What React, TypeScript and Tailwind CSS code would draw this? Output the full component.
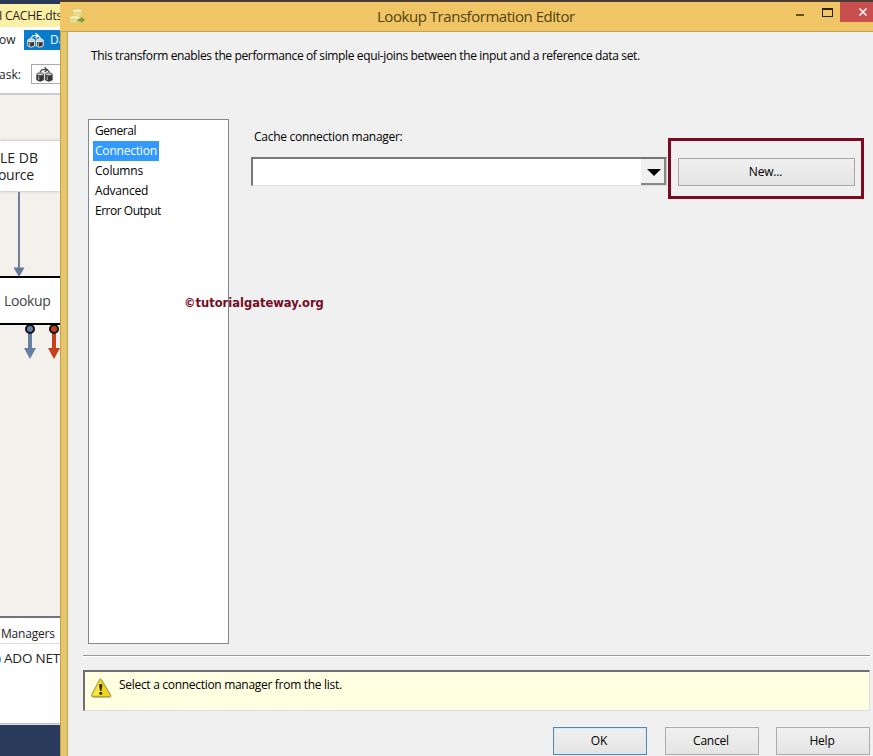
import type { ReactNode } from "react";

const pages = [
  { name: "General", style: "w-[44px] tracking-[-0.45px]" },
  { name: "Connection", style: "w-[66px] tracking-[-0.2px]", active: true },
  { name: "Columns", style: "w-[52px] tracking-[-0.2px]" },
  { name: "Advanced", style: "w-[57px] tracking-[-0.2px]" },
  { name: "Error Output", style: "w-[70px] tracking-[-0.48px]" },
];

function DataFlowIcon({ className }: { className?: string }) {
  return (
    <svg viewBox="0 0 17 17" className={className}>
      <g fill="#353535" stroke="currentColor" strokeWidth=".9">
        <path d="M.8 8.500v5.500q3.400 2.500 6.800 0V8.500zM9.400 8.500v5.500q3.400 2.500 6.800 0V8.500z" />
        <ellipse cx="4.200" cy="8.300" rx="3.400" ry="1.500" fill="#c9c9c9" />
        <ellipse cx="12.800" cy="8.300" rx="3.400" ry="1.500" fill="#c9c9c9" />
      </g>
      <path d="M2.700 10.500v3.500M11.300 10.500v3.500" stroke="#aaa" strokeWidth="1.200" />
      <path d="M4 6.200 6 3.700h5M8.500 1.200 11.300 3.700 8.500 6.200M11.500 4l2 2.200" fill="none" stroke="currentColor" strokeWidth="1.200" />
    </svg>
  );
}

function EditorIcon() {
  return (
    <svg viewBox="0 0 17 17" className="h-[17px] w-[17px]">
      <g fill="#e9dc8d" stroke="#d6c36c" strokeWidth=".6">
        <path d="M3.500 1.500v6.500q4.500 2 9.500 0V1.500z" />
        <path d="M3.500 1.700q4.700-1.500 9.500 0v2q-4.700 1.200-9.500 0z" fill="#faf4c0" />
        <path d="M.7 8.500v6q5 2 10.500 0v-6z" />
        <path d="M.7 8.500q5-1.500 10.500 0v2q-5 1.200-10.500 0z" fill="#faf4c0" />
      </g>
      <path d="M8 13.500c1-2.500 2-3 4-3V8.700l4.300 3.300L12 15v-1.700c-2 0-2.500 0-4 .7z" fill="#7f9b3a" />
    </svg>
  );
}

function WarningIcon() {
  return (
    <svg viewBox="0 0 22 20" className="h-[20px] w-[22px]">
      <path d="M11.800 1.800 21 17.500q.6 2-1 2H3" fill="none" stroke="#8b8660" strokeOpacity=".5" />
      <path d="M11 1.200 20.500 17q.7 1.600-1 1.600h-17q-1.700 0-1-1.600L9.800 1.200q.6-.8 1.200 0z" fill="#ecd51a" stroke="#a99a42" />
      <path d="M10.500 3 3 17h8z" fill="#f9e94a" />
      <path d="M9 6.500q1.700-1 3.400 0l-.9 6.200H9.900z" fill="#332c0b" />
      <circle cx="10.700" cy="15.200" r="1.500" fill="#332c0b" />
    </svg>
  );
}

function Button({ children, className }: { children: ReactNode; className: string }) {
  return (
    <button className={`border bg-gradient-to-b from-[#f0f0f0] to-[#e4e4e4] pr-[2px] text-center tracking-[-0.2px] ${className}`}>
      {children}
    </button>
  );
}

function DesignerPane() {
  return (
    <div className="flex w-[60px] shrink-0 flex-col overflow-hidden whitespace-nowrap bg-white text-[#222]">
      <div className="h-1 shrink-0 bg-[#293955]" />
      <div className="flex h-[23px] shrink-0 items-center bg-[#fbf0a5] text-[12px] leading-[22px]">
        <span className="-ml-px tracking-[-0.2px]">I CACHE.dts</span>
      </div>
      <div className="flex h-[26px] shrink-0 items-center text-[12px]">
        <span className="-ml-px w-[25px] shrink-0">ow</span>
        <div className="flex h-5 w-14 shrink-0 items-center gap-[7px] bg-[#087bca] pl-[3px] text-white">
          <DataFlowIcon className="h-[17px] w-[17px] shrink-0" />
          <span className="-ml-px">Data Flow</span>
        </div>
      </div>
      <div className="flex h-[40px] shrink-0 items-center text-[12px]">
        <span className="-ml-px w-8 shrink-0 pt-[3px]">ask:</span>
        <div className="mt-[2px] flex h-5 w-14 shrink-0 items-center border border-[#aaa] pl-1 text-[#444]">
          <DataFlowIcon className="h-[17px] w-[17px]" />
        </div>
      </div>
      <div className="h-[2px] shrink-0 bg-[#c9cad6]" />

      <div className="relative h-[521px] shrink-0 bg-[#f4f0eb]">
        <div className="absolute top-[46px] left-0 h-[50px] w-[60px] bg-white pt-2 text-[14px] leading-[17px] shadow-[0_0_3px_#aaa]">
          <div>LE DB</div>
          <div className="-ml-[2px] tracking-[-0.3px]">ource</div>
        </div>
        <svg viewBox="0 0 60 270" className="absolute top-0 left-0 h-[270px] w-[60px]">
          <path d="M19 97v78" stroke="#717d90" strokeWidth="2" />
          <path d="M13.500 172.500h11L19 182z" fill="#64799a" />
          <g fill="#6680a5">
            <path d="M28 236h4v17h4l-6 11-6-11h4z" />
            <circle cx="30" cy="234" r="4" stroke="#111" strokeWidth="2" />
          </g>
          <g fill="#c4401c">
            <path d="M52 236h4v17h4l-6 11-6-11h4z" />
            <circle cx="54" cy="234" r="4" stroke="#111" strokeWidth="2" />
          </g>
        </svg>
        <div className="absolute top-[181px] left-0 flex h-[49px] w-[60px] items-center border-y-2 border-black bg-white pl-1 text-[14px] tracking-[-0.35px] text-[#444]">
          Lookup
        </div>
      </div>

      <div className="h-[2px] shrink-0 bg-[#70737c]" />
      <div className="flex h-[26px] shrink-0 items-center border-b border-[#ddd] pt-[6px] text-[12px] leading-5">
        <span className="ml-px tracking-[-0.2px]">Managers</span>
      </div>
      <div className="flex h-[28px] shrink-0 items-center text-[13.5px]">
        <span className="-ml-[3px] w-[6px] shrink-0">)</span>
        <span className="ml-px tracking-[-0.2px]">ADO NET</span>
      </div>
      <div className="h-[52px] shrink-0 border-b border-[#bbb]" />
      <div className="h-8 shrink-0 border-t border-[#dde] bg-[#293a5b]" />
    </div>
  );
}

function TitleBar() {
  return (
    <div className="flex h-[30px] shrink-0 items-start border-b border-[#c0a363] text-[#54420f]">
      <div className="mt-[6px] ml-[9px] w-[17px]">
        <EditorIcon />
      </div>
      <div className="ml-[291px] w-[400px] text-[15px] leading-[29px] tracking-[-0.46px]">
        Lookup Transformation Editor
      </div>
      <div className="mt-3 ml-[19px] h-[2px] w-2 bg-[#66501c]" />
      <div className="mt-[6px] ml-[18px] h-[9px] w-[11px] border border-t-2 border-[#2c230d]" />
      <div className="ml-auto flex h-5 w-[33px] items-center justify-end bg-[#c94f4f] pr-[6px]">
        <svg viewBox="0 0 8 8" className="h-2 w-2" stroke="#fff" strokeWidth="1.5">
          <path d="m.5.5 7 7m0-7-7 7" />
        </svg>
      </div>
    </div>
  );
}

export default function App() {
  return (
    <div className="flex h-[756px] w-[873px] overflow-hidden bg-[#293955] font-['Open_Sans','Noto_Sans',sans-serif]">
      <DesignerPane />
      <div className="flex min-w-0 flex-1 flex-col border-t-2 border-[#493b32] bg-[#efc565]">
        <TitleBar />
        <div className="flex min-h-0 flex-1">
          <div className="w-2 shrink-0 border-r border-l border-r-[#c4a34e] border-l-[#c99f45] bg-[#e4c66b]" />
          <main className="flex min-w-0 flex-1 flex-col bg-[#f0f0f0] pr-[3px] pl-[15px] text-[12px] leading-5 text-black">
            <p className="mt-[14px] ml-2 h-[73px] tracking-[-0.365px] whitespace-nowrap">
              This transform enables the performance of simple equi-joins between the input and a reference data set.
            </p>

            <div className="flex h-[525px] pl-[5px]">
              <ul className="w-[141px] shrink-0 border border-[#828790] bg-white pt-[1px] pl-1">
                {pages.map((page) => (
                  <li
                    key={page.name}
                    className={`h-5 pl-[2px] whitespace-nowrap ${page.style} ${page.active ? "bg-[#3399ff] text-white" : ""}`}
                  >
                    {page.name}
                  </li>
                ))}
              </ul>

              <div className="ml-[22px] w-[416px] pt-2">
                <label className="ml-[3px] block tracking-[-0.28px]">Cache connection manager:</label>
                <div className="mt-[10px] flex h-[29px] border-t-2 border-r border-b border-l-2 border-t-[#777] border-r-[#ccc] border-b-[#ddd] border-l-[#777] bg-white">
                  <div className="ml-auto flex w-[25px] items-center justify-center border-r-2 border-b-2 border-[#888] bg-[#f0f0f0]">
                    <svg viewBox="0 0 14 7" className="mt-[2px] ml-[2px] h-[7px] w-[14px]">
                      <path d="M0 0h14L7 7z" fill="#000" />
                    </svg>
                  </div>
                </div>
              </div>

              <div className="mt-[19px] ml-px flex h-[61px] w-[196px] items-center border-[3px] border-[#7c0a20] pt-[6px] pl-[7px]">
                <Button className="h-[28px] w-[177px] border-[#a5aaa8] pt-px">New...</Button>
              </div>
            </div>

            <div className="mt-[11px] h-[2px] shrink-0 border-t border-b border-t-[#999] border-b-white" />

            <div className="mt-[13px] flex h-[41px] shrink-0 border-t-2 border-r border-b border-l-2 border-t-[#707070] border-r-[#ddd] border-b-[#ddd] border-l-[#707070] bg-[#ffffe1]">
              <div className="mt-[6px] ml-[5px]">
                <WarningIcon />
              </div>
              <span className="mt-[3px] ml-[7px] tracking-[-0.3px]">Select a connection manager from the list.</span>
            </div>

            <div className="mt-[16px] flex shrink-0 justify-end">
              <Button className="h-[28px] w-[94px] border-[#5786ad] shadow-[inset_0_0_0_1px_#d5eafb]">OK</Button>
              <Button className="ml-[18px] h-[28px] w-[94px] border-[#acacac]">Cancel</Button>
              <Button className="ml-[17px] h-[28px] w-[94px] border-[#acacac]">Help</Button>
            </div>
          </main>
        </div>
      </div>

      <div className="absolute top-[293px] left-[184px] font-['DejaVu_Sans',sans-serif] text-[11.5px] leading-5 font-bold text-[#750b22]">
        ©tutorialgateway.org
      </div>
    </div>
  );
}
